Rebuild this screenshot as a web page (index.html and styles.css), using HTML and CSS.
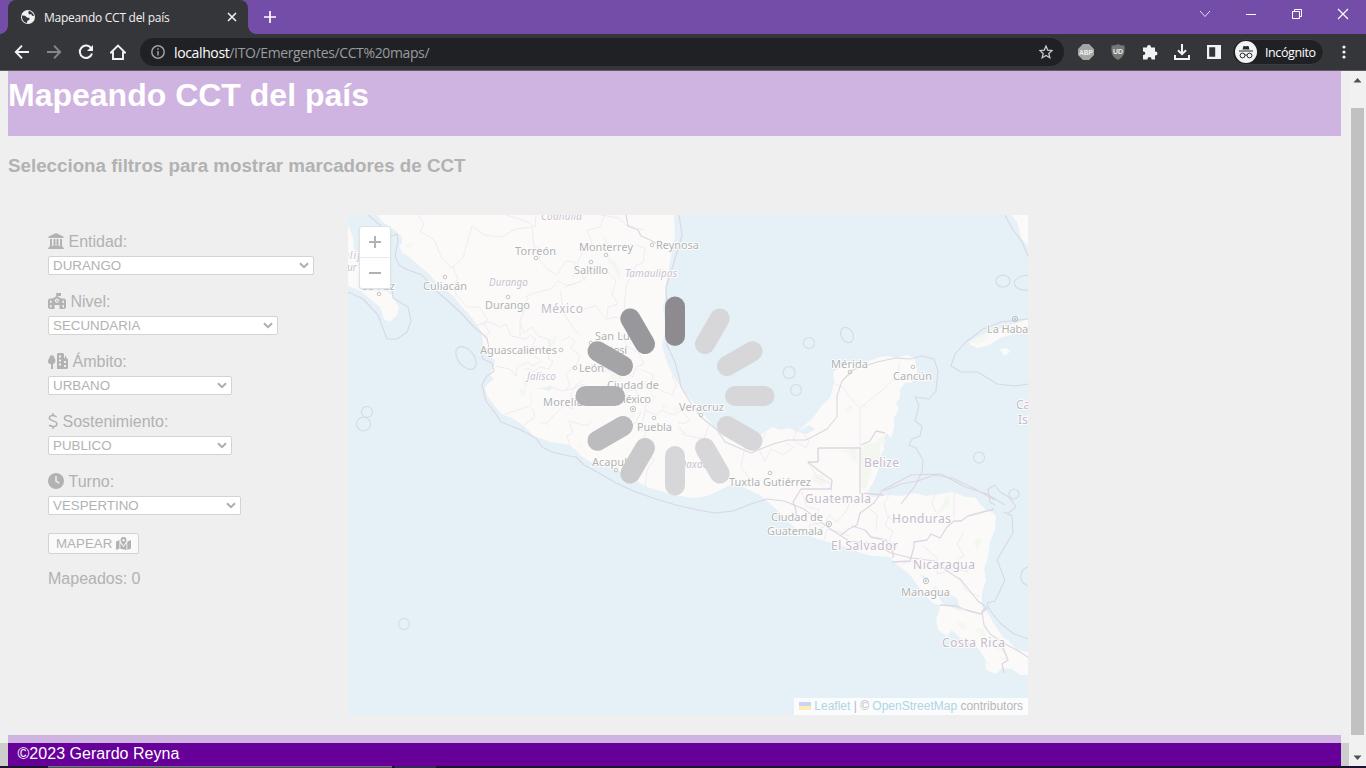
FILE: index.html
```html
<!DOCTYPE html>
<html lang="es">
<head>
<meta charset="utf-8">
<title>Mapeando CCT del país</title>
<link rel="stylesheet" href="styles.css">
</head>
<body>
<div class="tabstrip">
  <div class="tab">
    <svg class="globe" width="14" height="14" viewBox="0 0 14 14"><circle cx="7" cy="7" r="7" fill="#f1f1f2"/><path d="M1 5.500l3 .3 2 1.800 2.600.4-.2 1.800-2 1-.4 2.200C3 12.700 1.200 10 1 7zM7.800 1.100l-.6 2 1.200 1.400 1.800-.4.800 1.600 2 .4c-.3-2.600-2.600-4.700-5.200-5z" fill="#35363a"/></svg>
    <span class="tab-title">Mapeando CCT del país</span>
    <svg class="tab-close" width="10" height="10" viewBox="0 0 10 10"><path d="M1 1l8 8M9 1L1 9" stroke="#f1f1f2" stroke-width="1.600"/></svg>
  </div>
  <svg class="newtab" width="12" height="12" viewBox="0 0 12 12"><path d="M6 0v12M0 6h12" stroke="#fff" stroke-width="1.700"/></svg>
  <div class="window-buttons">
    <svg width="12" height="12" viewBox="0 0 12 12"><path d="M1 3l5 5.500L11 3" fill="none" stroke="#e8dff3"/></svg>
    <svg width="12" height="12" viewBox="0 0 12 12"><path d="M1 6.500h10" stroke="#fff"/></svg>
    <svg width="12" height="12" viewBox="0 0 12 12"><path d="M1.500 3.500h7v7h-7zM3.500 3.500v-2h7v7h-2" fill="none" stroke="#fff"/></svg>
    <svg width="12" height="12" viewBox="0 0 12 12"><path d="M1 1l10 10M11 1L1 11" stroke="#fff" stroke-width="1.200"/></svg>
  </div>
</div>
<div class="toolbar">
  <div class="nav">
    <svg width="16" height="16" viewBox="0 0 16 16"><path d="M15 8H2M8 1.700L1.800 8 8 14.300" fill="none" stroke="#f1f3f4" stroke-width="1.900"/></svg>
    <svg width="16" height="16" viewBox="0 0 16 16"><path d="M1 8h13M8 1.700L14.200 8 8 14.300" fill="none" stroke="#85878a" stroke-width="1.900"/></svg>
    <svg width="16" height="16" viewBox="0 0 16 16"><path d="M13.300 4.500A6.200 6.200 0 1 0 14 9.500" fill="none" stroke="#f1f3f4" stroke-width="2"/><path d="M15 1v6H9z" fill="#f1f3f4"/></svg>
    <svg width="16" height="16" viewBox="0 0 16 16"><path d="M1 8.500L8 1.500l7 7h-2V15H3V8.500z" fill="none" stroke="#f1f3f4" stroke-width="1.900"/></svg>
  </div>
  <div class="omnibox">
    <svg width="14" height="14" viewBox="0 0 14 14"><circle cx="7" cy="7" r="6.200" fill="none" stroke="#9aa0a6" stroke-width="1.500"/><path d="M7 6v4.500M7 3.300v1.500" stroke="#9aa0a6" stroke-width="1.500"/></svg>
    <span class="url"><b>localhost</b>/ITO/Emergentes/CCT%20maps/</span>
    <svg class="star" width="14" height="14" viewBox="0 0 14 14"><path d="M7 1l1.700 4.100 4.400.4-3.300 2.900 1 4.300L7 10.400l-3.800 2.300 1-4.300L.9 5.500l4.400-.4z" fill="none" stroke="#c8cacd" stroke-width="1.300"/></svg>
  </div>
  <div class="extensions">
    <svg width="16" height="16" viewBox="0 0 16 16"><path d="M5 0h6l5 5v6l-5 5H5l-5-5V5z" fill="#a5a5a5"/><text x="8" y="10.800" text-anchor="middle" textLength="14" lengthAdjust="spacingAndGlyphs" class="abp">ABP</text></svg>
    <svg width="16" height="16" viewBox="0 0 16 16"><path d="M8 0q3 2 6.500 1.500C15 9 14 13 8 16 2 13 1 9 1.500 1.500 5 2 8 0 8 0z" fill="#777"/><text x="8" y="10" text-anchor="middle" class="ublock">UD</text></svg>
    <svg width="16" height="16" viewBox="0 0 16 16"><path d="M1 3.500h4V3a2 2 0 0 1 4 0v.5h4v4h.5a2 2 0 0 1 0 4H13v4H9.500V15a2 2 0 0 0-4 0v.5H1V11h.5a1.800 1.800 0 0 0 0-3.600H1z" fill="#f1f3f4"/></svg>
    <svg width="16" height="16" viewBox="0 0 16 16"><path d="M8 0v10M4 6.200l4 4 4-4M1 11v4h14v-4" fill="none" stroke="#f1f3f4" stroke-width="2"/></svg>
    <svg width="16" height="16" viewBox="0 0 16 16"><path d="M1 1h14v14H1zM3.200 3.200v9.600h6V3.200z" fill="#f1f3f4" fill-rule="evenodd"/></svg>
  </div>
  <div class="profile">
    <svg width="22" height="22" viewBox="0 0 22 22"><circle cx="11" cy="11" r="11" fill="#f1f3f4"/><path d="M7.500 8.500L8.500 5h1.500l1 .5 1-.5h1.500l1 3.500zM4 9.500h14v1H4z" fill="#28292c"/><circle cx="7.500" cy="14.500" r="2.400" fill="none" stroke="#28292c"/><circle cx="14.500" cy="14.500" r="2.400" fill="none" stroke="#28292c"/><path d="M10 14.200q1-.6 2 0" stroke="#28292c" fill="none"/></svg>
    <span>Incógnito</span>
  </div>
  <svg class="menu" width="4" height="14" viewBox="0 0 4 14" fill="#f1f3f4"><circle cx="2" cy="2" r="1.600"/><circle cx="2" cy="7" r="1.600"/><circle cx="2" cy="12" r="1.600"/></svg>
</div>
<div class="viewport">
  <div class="page">
    <header class="banner"><h1>Mapeando CCT del país</h1></header>
    <h3 class="subtitle">Selecciona filtros para mostrar marcadores de CCT</h3>
    <main class="content">
      <form class="filters">
        <div class="field">
          <label><svg width="16" height="16" viewBox="0 0 16 16"><path d="M8 0l7.500 3.500V5H.5V3.500zM2 6h2v7h1.500V6h2v7h1V6h2v7H12V6h2v7l1 1 1 2H0l1-2 1-1z"/></svg>Entidad:</label>
          <div class="select entidad">DURANGO<svg width="10" height="7" viewBox="0 0 10 7"><path d="M1 1.200l4 4 4-4"/></svg></div>
        </div>
        <div class="field">
          <label><svg width="18" height="16" viewBox="0 0 18 16"><path fill-rule="evenodd" d="M8.200 0H13v3H9.700v.6L13.500 5.500h3L18 7v7.500L16.500 16h-5v-4h-5v4h-5L0 14.500V7l1.500-1.500h3l3.700-2.300zM2 7.500v2.500h1.500V7.500zm0 4.500v2.500h1.500V12zm12.500-4.500v2.500H16V7.500zm0 4.500v2.500H16V12zM9 5.500a2.200 2.200 0 1 0 .1 0zM8.500 6.500h1v1.200h1v1h-2z"/></svg>Nivel:</label>
          <div class="select nivel">SECUNDARIA<svg width="10" height="7" viewBox="0 0 10 7"><path d="M1 1.200l4 4 4-4"/></svg></div>
        </div>
        <div class="field">
          <label><svg width="20" height="16" viewBox="0 0 20 16"><path fill-rule="evenodd" d="M4 2q2 .5 2.500 3.200Q8.300 8 6.500 10 6 11 5 11v5H3v-5Q-.2 11 0 8q.2-1.500 1-2.500Q1.500 2.500 4 2zM9 1l1-1h5l1 1v4h1V3h1.200v2L20 6v9l-1 1H9zm2 1.500v2h2v-2zm0 4v2h2v-2zm0 4v2h2v-2zm5-2.500v2h2V8zm0 4v2h2v-2z"/></svg>Ámbito:</label>
          <div class="select ambito">URBANO<svg width="10" height="7" viewBox="0 0 10 7"><path d="M1 1.200l4 4 4-4"/></svg></div>
        </div>
        <div class="field">
          <label><svg width="10" height="16" viewBox="0 0 10 16"><path d="M8.700 3.700Q1.300 1 1.300 5c0 3.500 7.600 2.200 7.600 5.800 0 3.700-4.800 3-7.900 1.500M5 0v2.700M5 13v3" fill="none" stroke="#b2b2b2" stroke-width="1.500"/></svg>Sostenimiento:</label>
          <div class="select sosten">PUBLICO<svg width="10" height="7" viewBox="0 0 10 7"><path d="M1 1.200l4 4 4-4"/></svg></div>
        </div>
        <div class="field">
          <label><svg width="16" height="16" viewBox="0 0 16 16"><circle cx="8" cy="8" r="8"/><path d="M8 3v5l3.300 2.200" fill="none" stroke="#efefef" stroke-width="1.500"/></svg>Turno:</label>
          <div class="select turno">VESPERTINO<svg width="10" height="7" viewBox="0 0 10 7"><path d="M1 1.200l4 4 4-4"/></svg></div>
        </div>
        <div class="mapear">MAPEAR<svg width="15" height="13" viewBox="0 0 15 13"><path d="M0 4.500L3.500 3v8.500L0 13zM15 3v8.500L11.300 13V4.500zM4.300 6l3.200 4 3-4v7l-6.200-1.300z"/><path fill-rule="evenodd" d="M7.500 0a3 3 0 0 1 3 3q0 2-3 5.500-3-3.500-3-5.500a3 3 0 0 1 3-3zM7.500 2a1.200 1.200 0 1 0 .1 0z"/></svg></div>
        <p class="count">Mapeados: 0</p>
      </form>
      <div class="map">
        <svg class="map-tiles" width="680" height="500" viewBox="348 215 680 500">
          <rect x="348" y="215" width="680" height="500" fill="#e5f1f6"/>
          <g class="land">
            <path d="M377 215L383 222 390 227 396 231 402 237 402 242 399 247 403 253 409 257 415 262 422 268 428 273 436 282 443 288 450 293 455 298 461 306 467 312 473 319 477 325 481 331 483 342 485 350 490 357 495 360 494 366 492 370 489 374 494 379 490 382 485 387 487 395 492 402 497 409 503 415 512 418 520 423 530 432 534 437 540 438 551 442 564 444 570 445 577 451 580 455 587 460 593 463 605 466 620 472 633 479 647 487 657 490 667 493 680 496 693 498 702 497 710 495 720 490 730 485 738 485 747 489 760 495 769 503 777 510 783 517 790 523 797 530 807 535 821 540 840 545 853 550 867 555 878 556 890 557 895 563 903 569 910 575 918 586 927 597 933 603 940 605 939 612 936 618 938 630 947 636 952 630 960 638 973 643 980 651 990 667 985 661 986 670 996 674 1002 668 1012 669 1020 675 1028 675V652L1017 650 1009 641 1003 637 994 624 987 612 982 607 982 592 986 580 984 569 988 557 990 541 995 530 996 517 993 513 986 510 980 504 976 498 966 497 953 492 940 494 927 496 914 493 901 496 890 495 873 497 866 494 873 483 878 471 880 457 884 449 883 440 886 433 891 438 894 428 894 418 899 409 896 403 900 398 900 389 906 382 911 383 914 377 917 372 915 358 907 355 897 358 888 356 880 357 866 362 852 362 843 366 833 372 834 383 830 398 822 405 813 418 805 425 797 432 790 428 780 430 773 427 760 435 752 437 740 438 728 437 717 430 710 422 704 414 698 408 689 398 677 382 672 374 666 360 662 345 665 333 665 322 663 308 665 298 666 282 670 262 675 236 674 215z"/>
            <path d="M348 225L353 237 354 249 359 267 366 277 382 287 391 294 399 307 397 315 390 322 384 319 380 307 371 300 361 291 348 286z"/>
            <path d="M969 344L981 337 993 330 1009 326 1028 319V333L1015 334 1000 338 990 345 977 348zM1000 349l7-1 3 4-6 4zM1011 215h17v31l-7-9-4-15z"/>
          </g>
          <g class="green">
            <path d="M601 234l5 3 2 7 4 1-1 5-5-4zM607 253l6 8 3 0 5 13-2 5-5-11-6-6zM404 245l9-2-4 5zM523 377l5 8-4 3zM519 388l7 1-1 7-5-2zM530 393l3 10-3 3zM548 340l8-4-1 8-7 2zM598 365l9 2-2 5-6-1zM612 374l12 1-3 7-9-3zM641 381l6 0-1 6zM651 393l6 4-3 4zM660 403l8 2-4 5zM672 407l12 1-8 4zM681 430l7 2-6 3zM545 426l4-1-1 3zM576 446l5-2-2 3zM630 412l6 2-5 5zM812 474l12 1 2 8-6 3-8-6zM866 444l15-3-2 24-7 3-6 21-6-1v-39zM840 451l17-3v14l-6-3-2-6zM974 543l4-6 4 4-5 10zM940 508l8-14 2 10-9 8-6 5zM957 622l7 1 3 6-6 0zM974 628l10 2 3 7-7-1zM989 637l14 8 4 9-9-4zM1000 657l7 1-1 4zM970 342l12-7 8-3-2 6-10 6zM845 408l5-3 3 3-6 5zM861 405l7 1-2 4zM873 446l9-10 3 6z"/>
          </g>
          <g class="lake"><path d="M797 432l12-7 6 4-8 5zM919 574l10 4-3 3zM932 586l25 12 4 13-19-8zM537 388l15-1-2 4zM385 281l9 9-7-3z"/></g>
          <g class="states">
            <path d="M418 215l6 9-4 8 9 4 6 5 6 16 9 10 3 0 5 12-4 5 2 10 11 13 12 0 9 13-5 3 7 10-6 3 4 7M453 267l10-9 9-32 12 9 17 2 15-8 16-2 2 20 7 2-2 10 8 10 10 6 9-14 9 1-2 16M507 215l21 7 7 5 1-12M520 336l0-16 7-14 0-10 11-4 13-3 7-8 9 4 8-1M477 325l12-3 12 5 5-3 5 12 15 3 4-4 6 5-5 7 7 0-3 9 5 4M520 323l4 10 8-6 6 9 10 3 3 10-3 10 5 2-4 8-9-2-7 5-5-4-3 2M495 366l15 3 6 7 1-9 11-5 4 4 9-5M503 415l9-3 17-6 5 5 0 7-9 6-3 5M540 423l7 0 8-9 9-9 9 4-2-15 6-10 6-4M548 386l14 5 12-3 11-4M570 445l-3-9 6-3-4-12 14 4 6 0 2-4M560 291l5 24 7 11 7 9M565 287l16-6 13-11 11-1 11 12-4 13 6 10-10 3-1 12M585 281l-8-17 6-14 9-7-5-13 13-3 5-13M601 215l18 3 7 7 18 5M635 245l10 3-2 15-7 2-10 22-2 23 7 4-4 12M580 310l16-4 10 13 10-2 11 4M561 341l8-4 6 4-4 8 9 6-4 11M575 365l-9 9 4 11-4 4M591 365l7-2 6 10 4-4 4 7M613 375l5-7 15 9 3-10 8-3-5-11-11-6-7-13M641 369l13 6-3 7 9 8 12 5 4-10-4-9M626 390l10 0 3 10 9-3-3 13 12 5 4-5 12 5 9-4 8 9-5 3-7 0M613 443l7-14 16-6 5-12M645 411l-4 19 5 2-3 11 11 17-7 10-2 17M709 425l-5 14-20-4-5-9M740 438l5 9-4 20 9 12-3 6M766 433l-8 14 7 14 6-12 12 6 11-8-8-4M833 383l10 4 6 9 11 12 10-8 7-6 8-6 7-8 6 0 1-18M860 408V447M802 432l7 9-3 7-13-8 4-11M818 448l1 13-11 2 10 15 12 5 2 9M954 492v26M936 512l-4-8 4-13M892 491l-8 12 3 13 10 7M897 548l-8-7 4-10-8-5 4-11M868 507l9 8-1 15M802 492l4 14 13 4-4 12 8 6 6-13 8 7 10-12 2-6M812 534l-3-9 12-2M824 540l3-11 13 3 9 4M923 546l14 12 0 16 19-5 12 3M968 572l-11-13 7-3-7-12 7-12M959 577l7 13 13 7M902 564l14-4 7 10"/>
          </g>
          <g class="borders">
            <path d="M626 215l2 11 10 4 3 6 9 4 13 7M885 433l-9-2-6 10-9 4M860 447v46M818 448h42M818 448v14l-10 0 10 8 14 10-1 9h-30l-8 13 3 8 0 10M860 493l24 2M882 491l-8 12-14 10-3 12-8 4-8 6M852 526l13 4 6 7 15 3 7 12 0 6M892 562l18-1 4-14 0-5 13-2 4-6 9 4 7-11 7-6 7 0 7-5 26-7M940 605l16 1 10 4 15 4 6-6M1003 648l5 12-6 4 2 9"/>
          </g>
          <g class="sea-borders">
            <path d="M368 215l12 10 6 13 11-4 1 7-3 15 4 9 9 5 14 5 12 14 14 12 13 12 14 15 12 10 2 10-9 3 3 8 9 4 2 8-8 6-4 8 4 16 10 13 5 8 18 7 17 9 6 9 10 5 17 4 7 1 8 8 15 8 17 10 20 9 20 7 20 6 22 5 17 3 18-2 18-7 16-5 17 2 20 8 14 11 14 10 17 11 25 3 17 9 20 5 24 3 12 10 14 9 17 21 8 6-4 4 2 14 6 9 10 7 20 11 33 22 26 17M679 215l3 20-7 24-9 29 2 37-1 20 8 17 4 15 2 10 9 15 11 15 16 13 8 12 26 11 22-9 15-4 18 0 8-4 13-7 10-12 0-21 5-15 11-11 24-8 19-4 14 1 12-3 12 3 4 12-2 20-7 8-14-2 4 8-4 16 7 5-2 10-8 3-3 6 7 3 7 12-1 12-7 14-14 18M348 292l15 7 15 16 9 24 10 0 10-7 4-11-3-14-15-9-1-11M884 491l17-7 17-3 16-6 18 3 21 10 22 12M1028 319l-27 3-18 7-17 13-11 12-4 12 10 6 17 0 19 12 18 2 13-2M881 491l30-16 30-1 24 13 22 7 18 11M1005 215l8 15 9 12 6 14M1004 512l8 4 1 17-16 27 8 20-10 21-8 2 2 6 11 14 14 11 14 5M995 505l-5-3-2-13 7-4 5 7 9 5 7 10-8 6M1028 567q-8 2-7 12 1 4 7 7"/>
            <ellipse cx="466" cy="358" rx="8" ry="13" transform="rotate(-38 466 358)"/><circle cx="367" cy="412" r="5.500"/><circle cx="363.500" cy="424" r="7"/><circle cx="404" cy="624" r="5.500"/><ellipse cx="847" cy="335" rx="6" ry="8" transform="rotate(-30 847 335)"/><circle cx="809" cy="343" r="5.500"/><circle cx="789" cy="372.500" r="6"/><circle cx="796" cy="390" r="5.500"/><circle cx="979" cy="457.500" r="5.500"/><circle cx="1014" cy="494" r="5"/><ellipse cx="1003" cy="281" rx="7" ry="6"/><path d="M1028 275q-12 1-14 8 2 8 14 7"/>
          </g>
          <g class="towns">
            <circle cx="379" cy="294" r="1.800"/><circle cx="445" cy="277" r="1.800"/><circle cx="536" cy="258" r="1.800"/><circle cx="508" cy="297" r="1.800"/><circle cx="561" cy="350" r="1.800"/><circle cx="575" cy="368" r="1.800"/><circle cx="606" cy="255" r="1.800"/><circle cx="591" cy="262" r="1.800"/><circle cx="652" cy="245" r="1.800"/><circle cx="654" cy="418" r="1.800"/><circle cx="701" cy="415" r="1.800"/><circle cx="616" cy="470" r="1.800"/><circle cx="770" cy="473" r="1.800"/><circle cx="850" cy="372" r="1.800"/><circle cx="913" cy="367" r="1.800"/><circle cx="591" cy="343" r="1.800"/>
            <circle cx="633" cy="409" r="2.700"/><circle cx="633" cy="409" r=".8"/><circle cx="829" cy="524" r="2.700"/><circle cx="829" cy="524" r=".8"/><circle cx="926" cy="581" r="2.700"/><circle cx="926" cy="581" r=".8"/><circle cx="1015" cy="319" r="2.700"/><circle cx="1015" cy="319" r=".8"/>
          </g>
          <g class="city">
            <text x="362" y="290" textLength="33">La Paz</text><text x="423" y="290" textLength="44">Culiacán</text><text x="515" y="255" textLength="41">Torreón</text><text x="485" y="309" textLength="45">Durango</text><text x="480" y="354" textLength="77">Aguascalientes</text><text x="543" y="406" textLength="40">Morelia</text><text x="579" y="251" textLength="54">Monterrey</text><text x="656" y="249" textLength="43">Reynosa</text><text x="574" y="274" textLength="34">Saltillo</text><text x="595" y="340" textLength="43">San Luis</text><text x="597" y="354" textLength="30">Potosí</text><text x="579" y="372" textLength="25">León</text><text x="607" y="389" textLength="52">Ciudad de</text><text x="616" y="403" textLength="35">México</text><text x="637" y="431" textLength="35">Puebla</text><text x="679" y="411" textLength="45">Veracruz</text><text x="592" y="466" textLength="47">Acapulco</text><text x="729" y="486" textLength="82">Tuxtla Gutiérrez</text><text x="831" y="368" textLength="37">Mérida</text><text x="893" y="380" textLength="39">Cancún</text><text x="987" y="333" textLength="54">La Habana</text><text x="771" y="521" textLength="52">Ciudad de</text><text x="767" y="535" textLength="56">Guatemala</text><text x="901" y="596" textLength="49">Managua</text>
          </g>
          <g class="region">
            <text x="541" y="220" textLength="41">Coahuila</text><text x="489" y="286" textLength="39">Durango</text><text x="527" y="380" textLength="29">Jalisco</text><text x="625" y="277" textLength="52">Tamaulipas</text><text x="679" y="468" textLength="34">Oaxaca</text><text x="343" y="259" textLength="47">alifornia</text><text x="342" y="271">Sur</text>
          </g>
          <g class="country">
            <text x="541" y="313" textLength="42">México</text><text x="864" y="467" textLength="35">Belize</text><text x="805" y="503" textLength="66">Guatemala</text><text x="892" y="523" textLength="59">Honduras</text><text x="831" y="550" textLength="67">El Salvador</text><text x="913" y="569" textLength="62">Nicaragua</text><text x="942" y="647" textLength="63">Costa Rica</text><text x="1016" y="409">Caimán</text><text x="1018" y="424">Islas</text>
          </g>
        </svg>
        <div class="zoom">
          <div><svg width="14" height="14" viewBox="0 0 14 14"><path d="M7 1v12M1 7h12"/></svg></div>
          <div><svg width="14" height="14" viewBox="0 0 14 14"><path d="M1 7h12"/></svg></div>
        </div>
        <div class="attribution"><svg width="12" height="8" viewBox="0 0 12 8"><path d="M0 0h12v4H0z" fill="#c5d5f5"/><path d="M0 4h12v4H0z" fill="#fdedb0"/></svg> <a>Leaflet</a> | © <a>OpenStreetMap</a> contributors</div>
        <svg class="spinner" width="200" height="200" viewBox="-100 -100 200 200">
          <defs><rect id="bar" x="-10" y="-99.500" width="20" height="49.500" rx="10"/></defs>
          <use href="#bar" fill="#8d8b90"/>
          <g fill="#d7d7d9"><use href="#bar" transform="rotate(30)"/><use href="#bar" transform="rotate(60)"/><use href="#bar" transform="rotate(90)"/><use href="#bar" transform="rotate(120)"/><use href="#bar" transform="rotate(150)"/><use href="#bar" transform="rotate(180)"/></g>
          <use href="#bar" fill="#cacacc" transform="rotate(210)"/>
          <use href="#bar" fill="#bcbcbf" transform="rotate(240)"/>
          <use href="#bar" fill="#b0b0b3" transform="rotate(270)"/>
          <use href="#bar" fill="#a4a4a7" transform="rotate(300)"/>
          <use href="#bar" fill="#98979c" transform="rotate(330)"/>
        </svg>
      </div>
    </main>
    <div class="footer-row"><footer>©2023 Gerardo Reyna</footer></div>
  </div>
  <div class="scrollbar">
    <svg width="9" height="5" viewBox="0 0 9 5"><path d="M4.500 0L8.500 4.500h-8z" fill="#505050"/></svg>
    <div class="thumb"></div>
    <svg width="9" height="5" viewBox="0 0 9 5"><path d="M4.500 5L8.500.5h-8z" fill="#505050"/></svg>
  </div>
</div>
<div class="taskbar"><div class="task-search"></div><div class="task-item"></div></div>
</body>
</html>
```
FILE: styles.css
```css
* { box-sizing: border-box; }
body {
  margin: 0;
  width: 1366px;
  height: 768px;
  overflow: hidden;
  display: flex;
  flex-direction: column;
  font-family: "Liberation Sans", Arial, sans-serif;
}
svg { display: block; flex: none; }

.tabstrip {
  height: 34px;
  background: #744da9;
  display: flex;
  padding-left: 8px;
}
.tab {
  position: relative;
  width: 240px;
  height: 34px;
  background: #35363a;
  border-radius: 8px 8px 0 0;
  display: flex;
  align-items: center;
  padding: 0 11px 0 13px;
  color: #f1f1f2;
  font: 12px "Open Sans", sans-serif;
}
.tab::before, .tab::after {
  content: "";
  position: absolute;
  bottom: 0;
  width: 8px;
  height: 8px;
}
.tab::before { left: -8px; background: radial-gradient(circle at 0 0, transparent 7.5px, #35363a 8px); }
.tab::after { right: -8px; background: radial-gradient(circle at 100% 0, transparent 7.5px, #35363a 8px); }
.tab-title { flex: 1; margin-left: 9px; letter-spacing: -.27px; white-space: nowrap; }
.newtab { margin: 11px 0 0 16px; }
.window-buttons { display: flex; gap: 34px; margin: 8px 17px 0 auto; }

.toolbar {
  height: 37px;
  background: #35363a;
  border-bottom: 1px solid #5d5e62;
  display: flex;
  align-items: center;
  padding-left: 14px;
}
.nav { display: flex; gap: 16px; }
.omnibox {
  width: 924px;
  height: 28px;
  margin-left: 14px;
  border-radius: 14px;
  background: #202124;
  display: flex;
  align-items: center;
  padding: 0 11px;
  color: #999ca0;
  font: 14px "Open Sans", sans-serif;
}
.url { margin-left: 9px; flex: 1; letter-spacing: -.37px; }
.url b { font-weight: 400; color: #fff; }
.extensions { display: flex; gap: 16px; margin-left: 14px; }
.abp { font: bold 8px "Liberation Sans", sans-serif; fill: #eee; }
.ublock { font: bold 7px "Liberation Sans", sans-serif; fill: #eee; }
.profile {
  width: 92px;
  height: 26px;
  margin-left: 10px;
  padding-left: 2px;
  border-radius: 13px;
  background: #202124;
  border: 1px solid #3c3d41;
  display: flex;
  align-items: center;
  gap: 8px;
  color: #fff;
  font: 12.5px "Open Sans", sans-serif;
  letter-spacing: -.4px;
}
.menu { margin-left: 18px; }

.viewport { height: 695px; display: flex; }
.page { width: 1349px; background: #efefef; display: flex; flex-direction: column; }
.banner { height: 65px; margin: 0 8px; background: #cfb3e1; }
.banner h1 { margin: 0; padding-top: 5px; font-size: 32px; line-height: 38px; color: #fff; }
.subtitle { margin: 19px 8px 0; font-size: 18.75px; line-height: 22px; color: #b2b2b2; }
.content { display: flex; height: 500px; margin: 38px 0 20px; }
.filters { width: 300px; margin-left: 48px; padding-top: 16px; color: #b2b2b2; }
.field { height: 60px; }
.field label { height: 21px; display: flex; align-items: center; gap: 4.500px; font-size: 16px; }
.field label svg { margin-top: -1px; }
.filters svg { fill: #b2b2b2; }
.select {
  height: 19px;
  margin-top: 4px;
  padding: 0 4px;
  display: flex;
  align-items: center;
  justify-content: space-between;
  border: 1px solid #d3d3d3;
  border-radius: 2px;
  background: #fff;
  font-size: 13.333px;
}
.select path { fill: none; stroke: #adadad; stroke-width: 2; }
.entidad { width: 266px; }
.nivel { width: 230px; }
.ambito, .sosten { width: 184px; }
.turno { width: 193px; }
.mapear {
  width: 91px;
  height: 21px;
  margin-top: 2px;
  padding-left: 7px;
  display: flex;
  align-items: center;
  gap: 4px;
  border: 1px solid #d3d3d3;
  border-radius: 2px;
  background: #fafafa;
  font-size: 13.333px;
}
.count { margin: 16px 0 0; font-size: 16px; line-height: 18px; }

.map { position: relative; width: 680px; height: 500px; overflow: hidden; }
.land { fill: #fbfaf9; }
.green { fill: #f3f7f0; stroke: #f6f9f4; stroke-width: 1.500; stroke-dasharray: 2 2; }
.lake { fill: #e5f1f6; }
.states { fill: none; stroke: #ece7ee; stroke-width: .8; }
.borders { fill: none; stroke: #e0d6e1; stroke-width: 1.300; stroke-linejoin: round; }
.sea-borders { fill: none; stroke: #dad7e2; stroke-width: 1.100; stroke-linejoin: round; }
.towns { fill: none; stroke: #b8b8b8; stroke-width: .8; }
.map-tiles text {
  font-family: "Noto Sans", sans-serif;
  paint-order: stroke;
  stroke: #fcfcfc;
  stroke-width: 2px;
  stroke-linejoin: round;
}
.city text { font-size: 11px; fill: #b2b2b2; }
.region text { font-size: 10px; font-style: italic; fill: #cdbfd0; }
.country text { font-size: 12px; fill: #c7b9ca; }
.zoom {
  position: absolute;
  left: 12px;
  top: 12px;
  width: 30px;
  height: 61px;
  background: #fff;
  border-radius: 2px;
  box-shadow: 0 0 0 1px #dde4e7, 0 1px 3px #ccd5d9;
}
.zoom div { height: 30px; display: flex; align-items: center; justify-content: center; }
.zoom div + div { height: 31px; border-top: 1px solid #e9e9e9; }
.zoom path { stroke: #b2b2b2; stroke-width: 2; }
.attribution {
  position: absolute;
  right: 0;
  bottom: 0;
  width: 234px;
  height: 17px;
  padding: 0 5px;
  background: #fafcfd;
  color: #b8b8b8;
  font-size: 12px;
  line-height: 17px;
  white-space: nowrap;
}
.attribution svg { display: inline-block; }
.attribution a { color: #aed5e6; }
.spinner { position: absolute; left: 227px; top: 81px; }

.footer-row { flex: 1; padding: 0 8px; background: linear-gradient(#efefef 8px, #cdcdcd 8px); }
footer {
  height: 31px;
  border-top: 8px solid #cfb3e1;
  background: #609;
  color: #fff;
  padding-left: 9.500px;
  font-size: 16px;
  letter-spacing: .04px;
  line-height: 21px;
}
.scrollbar {
  width: 17px;
  background: #f1f1f1;
  display: flex;
  flex-direction: column;
  align-items: center;
  padding-top: 7px;
}
.thumb { width: 13px; height: 627px; margin: 25px 0 20px; background: #c1c1c1; }

.taskbar { height: 2px; background: #20132f; display: flex; padding-left: 48px; gap: 3px; }
.task-search { width: 344px; background: #514c59; border-top: 1px solid #77717d; }
.task-item { width: 41px; background: #3c2857; }
```
